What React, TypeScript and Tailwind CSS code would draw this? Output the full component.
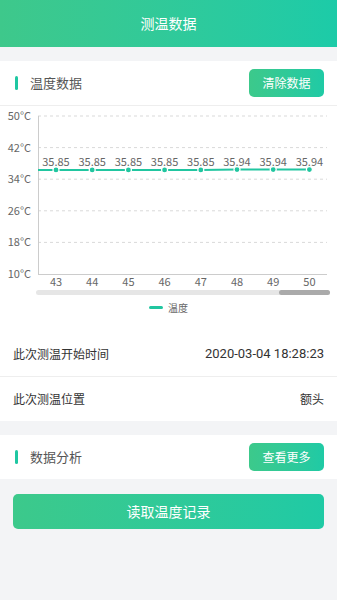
import React from 'react';

const font = { fontFamily: '"Noto Sans CJK SC", "Noto Sans", sans-serif' };
const numFont = { fontFamily: 'Roboto, "Noto Sans CJK SC", sans-serif' };

const yLevels = [50, 42, 34, 26, 18, 10];
const points = [
  { x: 43, v: 35.85 },
  { x: 44, v: 35.85 },
  { x: 45, v: 35.85 },
  { x: 46, v: 35.85 },
  { x: 47, v: 35.85 },
  { x: 48, v: 35.94 },
  { x: 49, v: 35.94 },
  { x: 50, v: 35.94 },
];

const TOP = 10;
const BOTTOM = 168;
// line sits a touch higher than exact scale, as in the original chart
const toY = (v: number) => BOTTOM - ((v - 10) / 40) * (BOTTOM - TOP) - 2;
const toX = (i: number) => 56 + i * 36.2;

function TempChart() {
  return (
    <svg width="337" height="182" viewBox="0 0 337 182" className="block">
      {yLevels.map((lv, i) => {
        const y = TOP + i * ((BOTTOM - TOP) / 5);
        return (
          <g key={lv}>
            {i < 5 && (
              <line x1="38" x2="327" y1={y} y2={y} stroke="#d9d9d9" strokeWidth="1" strokeDasharray="3 3" />
            )}
            <text x="31" y={y + 4} textAnchor="end" fontSize="11" fill="#666" style={font}>
              {lv}°C
            </text>
          </g>
        );
      })}
      <line x1="38.5" x2="38.5" y1={TOP} y2={BOTTOM} stroke="#ccc" strokeWidth="1" />
      <line x1="38" x2="327" y1={BOTTOM + 0.5} y2={BOTTOM + 0.5} stroke="#ccc" strokeWidth="1" />
      {points.map((p, i) => (
        <text key={'x' + p.x} x={toX(i)} y="180" textAnchor="middle" fontSize="11" fill="#666" style={font}>
          {p.x}
        </text>
      ))}
      <polyline
        points={[`38,${toY(points[0].v)}`, ...points.map((p, i) => `${toX(i)},${toY(p.v)}`)].join(' ')}
        fill="none"
        stroke="#21c6a0"
        strokeWidth="2"
      />
      {points.map((p, i) => (
        <g key={'p' + p.x}>
          <circle cx={toX(i)} cy={toY(p.v)} r="3" fill="#21c6a0" stroke="#fff" strokeWidth="1.2" />
          <text x={toX(i)} y={toY(p.v) - 4} textAnchor="middle" fontSize="11" fill="#666" style={font}>
            {p.v.toFixed(2)}
          </text>
        </g>
      ))}
    </svg>
  );
}

function SectionHeader({ title, action }: { title: string; action: string }) {
  return (
    <div className="flex h-[44px] items-center justify-between pl-[15px] pr-[13px]">
      <div className="flex items-center">
        <span className="h-[14px] w-[3px] rounded-full bg-[#1fc7a2]" />
        <span className="ml-[12px] text-[13px] text-[#555]">{title}</span>
      </div>
      <button className="h-[28px] w-[75px] rounded-[5px] bg-gradient-to-r from-[#3cc98b] to-[#1fcaa5] text-[12px] text-white">
        {action}
      </button>
    </div>
  );
}

export default function App() {
  return (
    <div className="min-h-[600px] w-[337px] bg-[#f3f4f6]" style={font}>
      <div className="flex h-[47px] items-center justify-center bg-gradient-to-r from-[#3ec88b] to-[#1ccba8]">
        <span className="text-[14px] text-white">测温数据</span>
      </div>

      <div className="mt-[14px] bg-white">
        <SectionHeader title="温度数据" action="清除数据" />
        <div className="border-t border-[#eeeeee]" />
        <TempChart />
        <div className="mx-[36px] mr-[7px] mt-[2px] h-[5px] rounded-full bg-[#e6e6e6]">
          <div className="ml-auto h-[5px] w-[51px] rounded-full bg-[#aaaaaa]" />
        </div>
        <div className="flex h-[22px] items-center justify-center pt-[3px]">
          <span className="h-[3px] w-[14px] rounded-full bg-[#21c6a0]" />
          <span className="ml-[5px] text-[10px] leading-none text-[#666]">温度</span>
        </div>
        <div className="mt-[14px] flex h-[46px] items-center justify-between border-b border-[#eeeeee] px-[13px] text-[12px] text-[#333]">
          <span>此次测温开始时间</span>
          <span className="text-[13px]" style={numFont}>2020-03-04 18:28:23</span>
        </div>
        <div className="flex h-[44px] items-center justify-between px-[13px] text-[12px] text-[#333]">
          <span>此次测温位置</span>
          <span>额头</span>
        </div>
      </div>

      <div className="mt-[14px] bg-white">
        <SectionHeader title="数据分析" action="查看更多" />
      </div>

      <div className="px-[13px] pt-[15px]">
        <button className="h-[35px] w-full rounded-[5px] bg-gradient-to-r from-[#3cc98b] to-[#1fcaa5] text-[14px] text-white">
          读取温度记录
        </button>
      </div>
    </div>
  );
}
